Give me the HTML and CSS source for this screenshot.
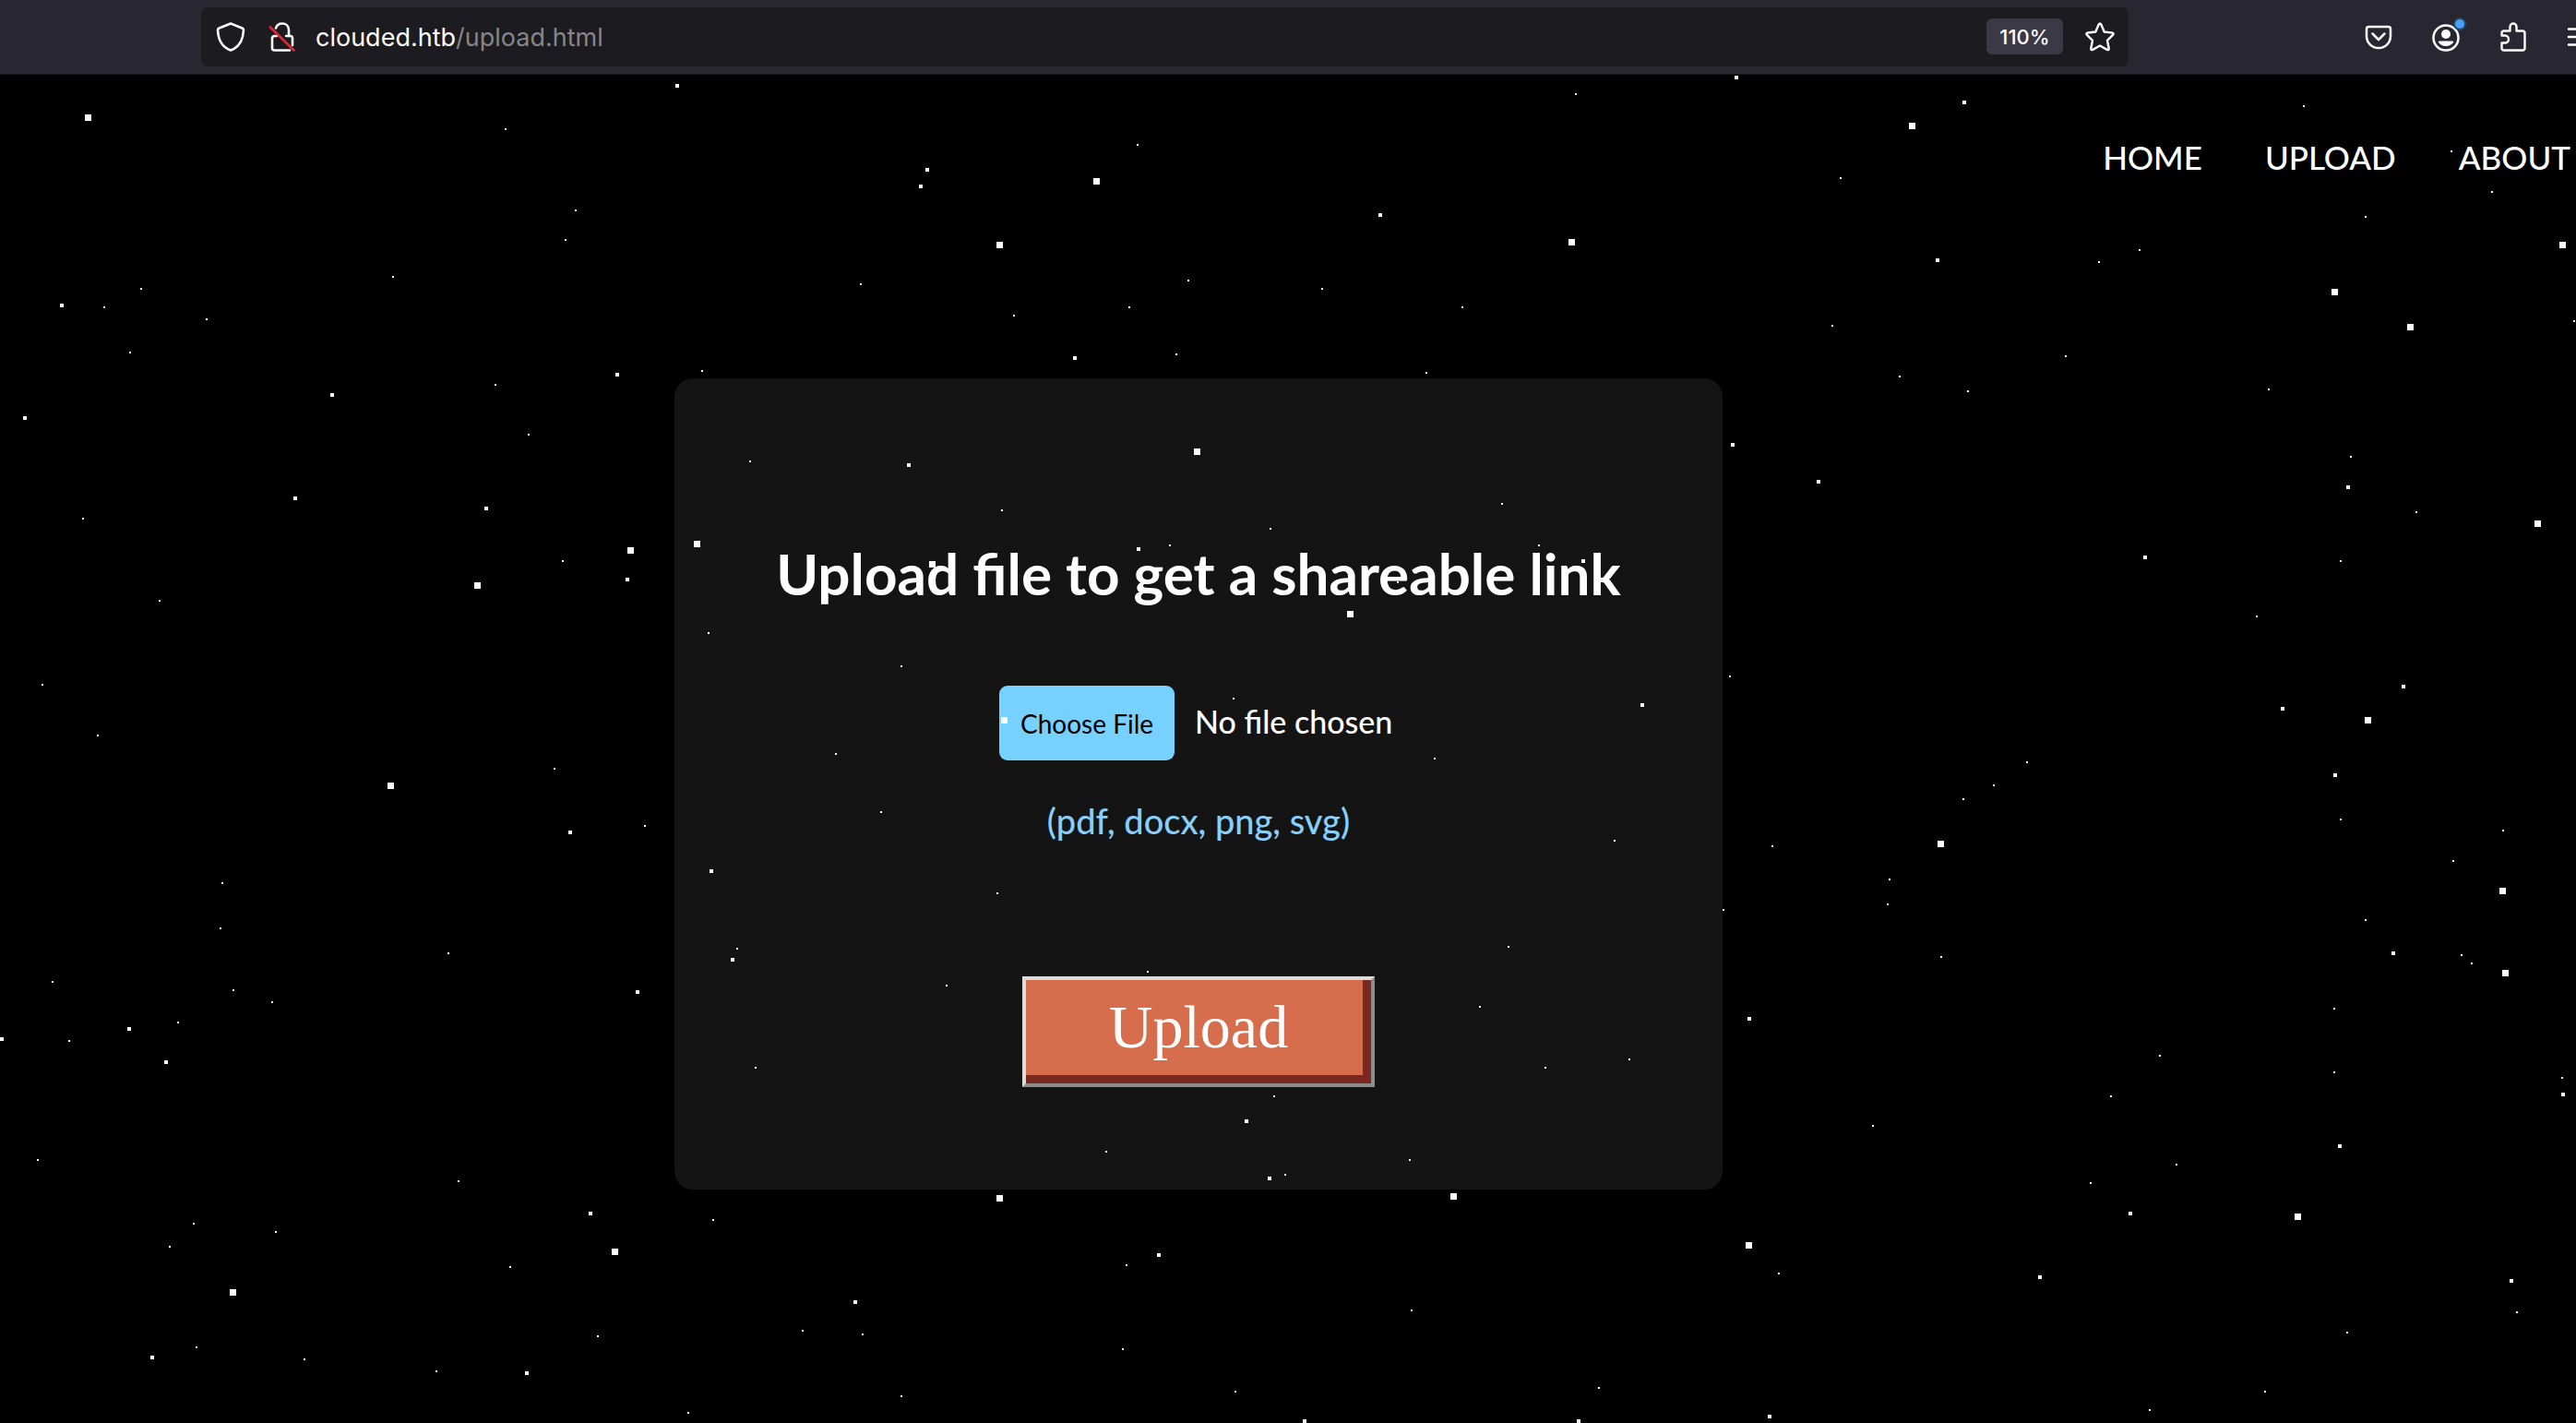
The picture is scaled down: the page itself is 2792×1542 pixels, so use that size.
FILE: index.html
```html
<!DOCTYPE html>
<html lang="en">
<head>
<meta charset="utf-8">
<title>Clouded - Upload</title>
<link rel="stylesheet" href="styles.css">
</head>
<body>
<div class="toolbar">
  <div class="urlbar">
    <button class="icon-button" type="button" aria-label="Tracking protection">
      <svg class="icon" viewBox="0 0 32 32"><path d="M16 1.500 28.500 6.500c1 .4 1.500 1 1.500 2C29.500 18.500 26 27 16 30.500 6 27 2.500 18.500 2 8.500c0-1 .500-1.600 1.500-2z" fill="none" stroke="#fbfbfe" stroke-width="2.600" stroke-linejoin="round"/></svg>
    </button>
    <button class="icon-button lock" type="button" aria-label="Connection not secure">
      <svg class="icon" viewBox="0 0 32 32"><g fill="none" stroke="#fbfbfe" stroke-width="2.600" stroke-linecap="round"><path d="M9 6.500C10 3 12.500 1.500 16 1.500c4 0 7 2.600 7 7V15"/><path d="M10 15H7.500Q5 15 5 17.500V28q0 2.500 2.500 2.500H24"/><path d="M20 15h4.500q2.500 0 2.500 2.500V25"/></g><path d="M3 5.500 28.500 30.500" stroke="#e22837" stroke-width="2.600" stroke-linecap="round"/></svg>
    </button>
    <div class="address" role="textbox" aria-label="Address" tabindex="0"><span class="host">clouded.htb</span>/upload.html</div>
    <button class="zoom-level" type="button">110%</button>
    <button class="icon-button" type="button" aria-label="Bookmark this page">
      <svg class="icon" viewBox="0 0 32 32"><path d="M14.700 2.500q1.300-2 2.600 0L20.700 10.500l8.500 1q2.300.600.800 2.300l-6 6 1.700 8.700q.200 2.200-1.900 1.400L16 25.500l-7.800 4.400q-2.100.8-1.900-1.400L8 19.800l-6-6q-1.500-1.700.8-2.300l8.500-1z" fill="none" stroke="#fbfbfe" stroke-width="2.400" stroke-linejoin="round"/></svg>
    </button>
  </div>
  <div class="tools">
    <button class="icon-button" type="button" aria-label="Save to Pocket">
      <svg class="icon" viewBox="0 0 32 32"><path d="M5.500 5h21q2.500 0 2.500 2.500V15c0 7.500-6 13-13 13S3 22.500 3 15V7.500Q3 5 5.500 5z" fill="none" stroke="#fbfbfe" stroke-width="2.500"/><path d="m9.500 12.500 6.500 6.500 6.500-6.500" fill="none" stroke="#fbfbfe" stroke-width="2.500" stroke-linecap="round" stroke-linejoin="round"/></svg>
    </button>
    <button class="icon-button account" type="button" aria-label="Account">
      <svg class="icon" viewBox="0 0 32 32"><circle cx="16" cy="17" r="13.500" fill="none" stroke="#fbfbfe" stroke-width="2.500"/><circle cx="16" cy="13" r="5" fill="#fbfbfe"/><path d="M9 20.500h14q2 0 1 1.500-3 4-8 4t-8-4q-1-1.500 1-1.500z" fill="#fbfbfe"/></svg>
      <span class="badge"></span>
    </button>
    <button class="icon-button" type="button" aria-label="Extensions">
      <svg class="icon" viewBox="0 0 32 32"><path d="M12.500 9.500V5a3.500 3.500 0 0 1 7 0v4.500H26q2.500 0 2.500 2.500v16q0 2.500-2.500 2.500H6q-2.500 0-2.500-2.500v-5.500H7a4 4 0 0 0 0-8H3.500V12Q3.500 9.500 6 9.500z" fill="none" stroke="#fbfbfe" stroke-width="2.400" stroke-linejoin="round"/></svg>
    </button>
    <button class="icon-button menu" type="button" aria-label="Menu">
      <svg class="icon" viewBox="0 0 32 32"><path d="M3 7.500h26M3 16h26M3 24.500h26" stroke="#fbfbfe" stroke-width="2.500" stroke-linecap="round"/></svg>
    </button>
  </div>
</div>

<nav class="site-nav">
  <a href="index.html">HOME</a>
  <a href="upload.html">UPLOAD</a>
  <a href="about.html">ABOUT</a>
</nav>

<main class="content">
  <form class="card">
    <h1 class="title"><label for="file">Upload file to get a shareable link</label></h1>
    <input class="file" id="file" type="file">
    <p class="formats">(pdf, docx, png, svg)</p>
    <button class="upload" type="submit">Upload</button>
  </form>
</main>

<div class="sky" aria-hidden="true">
  <div class="stars stars-small"></div>
  <div class="stars stars-medium"></div>
  <div class="stars stars-large"></div>
</div>
</body>
</html>
```
FILE: styles.css
```css
* {
  box-sizing: border-box;
}

body {
  position: relative;
  margin: 0;
  min-height: 100vh;
  overflow: hidden;
  background: #000;
  color: #fff;
  font-family: Lato, "Liberation Sans", sans-serif;
}

button {
  margin: 0;
  padding: 0;
  border: 0;
  background: none;
  color: inherit;
  font: inherit;
}

/* Browser toolbar */
.toolbar {
  display: flex;
  align-items: center;
  gap: 255px;
  height: 81px;
  padding: 0 0 1px 218px;
  border-bottom: 1px solid #151419;
  background: #282630;
  font-family: Inter, "Liberation Sans", sans-serif;
}

.urlbar {
  display: flex;
  flex: 1;
  align-items: center;
  gap: 24px;
  height: 64px;
  padding: 0 15px 0 16px;
  border-radius: 8px;
  background: #1c1b20;
}

.icon-button {
  position: relative;
  flex: none;
  width: 32px;
  height: 32px;
}

.icon {
  display: block;
  width: 32px;
  height: 32px;
}

.address {
  flex: 1;
  margin-left: -4px;
  padding-top: 2px;
  color: #86858a;
  font-size: 27px;
  line-height: 36px;
}

.host {
  color: #fbfbfe;
}

.zoom-level {
  width: 83px;
  height: 39px;
  border-radius: 6px;
  background: #3b3945;
  color: #fbfbfe;
  font-size: 22px;
  font-weight: 500;
}

.tools {
  display: flex;
  gap: 41px;
  margin-right: -21px;
}

.badge {
  position: absolute;
  top: -5px;
  right: -6px;
  width: 14px;
  height: 14px;
  border: 2px solid #27495f;
  border-radius: 50%;
  background: #45a1ff;
}

/* Site */
.site-nav {
  display: flex;
  justify-content: flex-end;
  gap: 68px;
  padding: 67px 6px 0;
  font-size: 35px;
  font-weight: 500;
  line-height: 44px;
}

.site-nav a {
  color: #fff;
  text-decoration: none;
}

.content {
  display: flex;
  justify-content: center;
  margin-top: 218px;
  padding-right: 194px;
}

.card {
  display: flex;
  flex-direction: column;
  align-items: center;
  width: 100%;
  max-width: 1136px;
  padding: 173px 40px 111px;
  border-radius: 20px;
  background: #141414;
}

.title {
  margin: 0 0 84px;
  font-size: 62px;
  font-weight: 700;
  line-height: 76px;
}

.file {
  width: 432px;
  height: 81px;
  margin-bottom: 41px;
  color: #fff;
  font-family: inherit;
  font-size: 34px;
  font-weight: 500;
}

.file::file-selector-button {
  height: 81px;
  margin-right: 22px;
  padding: 0 23px;
  border: 0;
  border-radius: 9px;
  background: #76d1ff;
  color: #000;
  font-family: inherit;
  font-size: 28px;
}

.formats {
  margin: 0 0 145px;
  color: #87cefa;
  font-size: 38px;
  font-weight: 500;
  line-height: 48px;
}

.upload {
  width: 382px;
  height: 120px;
  padding-bottom: 10px;
  border: 4px solid;
  border-color: #dcdcdc #8c8c8c #8c8c8c #dcdcdc;
  background: #d66d4c;
  box-shadow: inset -9px -9px #7a2822;
  color: #fff;
  font-family: "Liberation Serif", serif;
  font-size: 66px;
  line-height: 76px;
}

/* Star field: each shadow is one star, placed by its centre */
.sky {
  position: absolute;
  inset: 0;
  overflow: hidden;
  pointer-events: none;
}

.stars {
  position: absolute;
  color: #fff;
}

.stars-small {
  top: -1px;
  left: -1px;
  width: 2px;
  height: 2px;
  box-shadow: 548px 140px, 624px 228px, 613px 260px, 426px 300px, 153px 313px, 113px 333px,
    224px 346px, 141px 382px, 537px 417px, 761px 402px, 573px 471px, 813px 500px,
    90px 562px, 610px 608px, 173px 651px, 768px 686px, 46px 742px, 106px 797px, 906px 817px,
    1708px 102px, 1233px 157px, 933px 308px, 1288px 304px, 1433px 313px, 1099px 342px,
    1224px 333px, 1585px 333px, 1275px 384px, 1546px 404px, 1086px 553px, 1628px 546px,
    1377px 573px, 1268px 591px, 1668px 591px, 1515px 631px, 1030px 643px, 977px 722px, 1337px 757px,
    2497px 115px, 1995px 193px, 2657px 164px, 2701px 208px, 2564px 235px, 2319px 271px,
    2275px 284px, 1986px 353px, 2239px 386px, 2059px 408px, 2133px 424px, 2459px 422px,
    2790px 348px, 2548px 495px, 2619px 555px, 2537px 608px, 2446px 668px, 1875px 733px,
    601px 833px, 699px 895px, 241px 957px, 239px 1006px, 486px 1033px, 799px 1028px,
    57px 1064px, 253px 1073px, 295px 1086px, 193px 1108px, 75px 1128px, 819px 1157px,
    41px 1257px, 497px 1280px, 210px 1326px, 299px 1335px, 184px 1351px, 773px 1322px,
    553px 1373px, 213px 1460px, 330px 1473px, 473px 1486px, 648px 1448px, 870px 1442px, 746px 1531px,
    1555px 822px, 955px 880px, 1750px 911px, 1081px 968px, 1244px 1053px, 1026px 1068px,
    1635px 1026px, 1604px 1091px, 1675px 1157px, 1766px 1148px, 1381px 1188px, 1199px 1248px,
    1393px 1273px, 1528px 1257px, 1221px 1371px, 1530px 1420px, 935px 1446px, 1217px 1462px,
    977px 1513px, 1339px 1508px, 1733px 1504px,
    2197px 826px, 2161px 851px, 2128px 866px, 1921px 917px, 2048px 953px, 2046px 980px,
    1868px 986px, 2104px 1037px, 2537px 888px, 2713px 900px, 2659px 933px, 2564px 997px,
    2668px 1035px, 2679px 1044px, 2530px 1093px, 2530px 1162px, 2341px 1144px, 2288px 1188px,
    2030px 1220px, 2777px 1168px, 2359px 1262px, 2266px 1282px, 1928px 1380px, 2728px 1422px,
    2544px 1444px, 2455px 1508px, 2330px 1528px;
}

.stars-medium {
  top: -2px;
  left: -2px;
  width: 4px;
  height: 4px;
  box-shadow: 734px 93px, 67px 331px, 360px 428px, 27px 453px, 669px 406px, 320px 540px,
    527px 551px, 680px 628px, 1005px 184px, 998px 202px, 1496px 233px, 1165px 388px,
    985px 504px, 1234px 595px, 1716px 608px, 1780px 764px, 1882px 84px, 2129px 111px,
    2100px 282px, 1878px 482px, 1971px 522px, 2545px 528px, 2325px 604px, 2605px 744px,
    2474px 768px, 618px 902px, 771px 944px, 794px 1040px, 691px 1075px, 140px 1115px,
    2px 1126px, 180px 1151px, 640px 1315px, 165px 1471px, 571px 1488px, 927px 1411px,
    1351px 1215px, 1376px 1277px, 1256px 1360px, 1414px 1540px, 1711px 1540px,
    2531px 840px, 2594px 1033px, 1896px 1104px, 2778px 1186px, 2536px 1242px,
    2309px 1315px, 2211px 1384px, 2722px 1388px, 1918px 1535px;
}

.stars-large {
  top: -3px;
  left: -3px;
  width: 7px;
  height: 7px;
  box-shadow: 95px 127px, 683px 596px, 755px 589px, 517px 634px, 1188px 196px, 1083px 265px,
    1703px 262px, 1297px 489px, 1010px 611px, 1463px 665px, 1088px 780px, 2072px 136px,
    2777px 265px, 2530px 316px, 2612px 354px, 2750px 567px, 2566px 780px, 423px 851px,
    666px 1356px, 252px 1400px, 1083px 1298px, 1575px 1296px, 2103px 914px, 2712px 965px,
    2715px 1054px, 2490px 1318px, 1895px 1349px;
}
```
